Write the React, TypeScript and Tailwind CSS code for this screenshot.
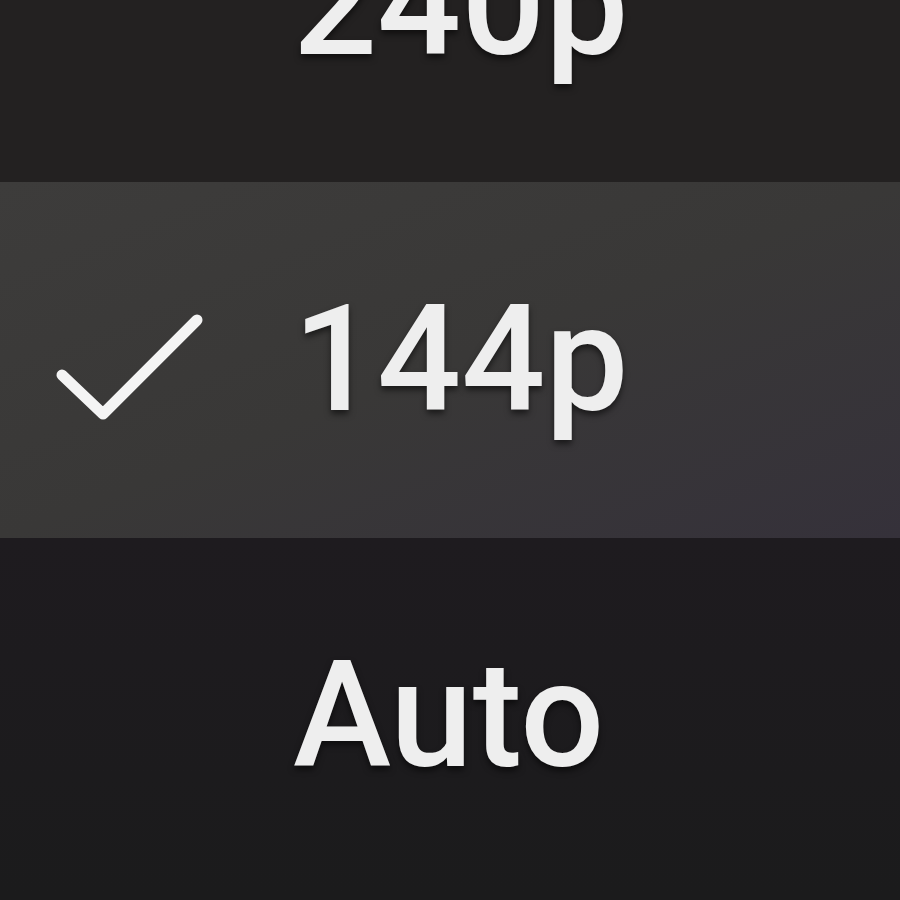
import React from "react";

type Item = { label: string; checked?: boolean; bg: string };

const items: Item[] = [
  { label: "240p", bg: "bg-[#232121]" },
  { label: "144p", checked: true, bg: "bg-gradient-to-br from-[#3d3c3b] via-[#393837] to-[#35313a]" },
  { label: "Auto", bg: "bg-gradient-to-b from-[#1e1b1f] to-[#1b1b1c]" },
];

const Check: React.FC = () => (
  <svg width="160" height="140" viewBox="0 0 160 140" fill="none">
    <path
      d="M15 85 L56 124 L150 30"
      stroke="#f4f4f4"
      strokeWidth="11"
      strokeLinecap="round"
      strokeLinejoin="round"
    />
  </svg>
);

const App: React.FC = () => {
  return (
    <div className="w-[900px] h-[900px] overflow-hidden bg-[#1b1b1c] select-none">
      <div className="flex flex-col -mt-[174px]">
        {items.map((item) => (
          <div key={item.label} className={`h-[356px] flex items-center ${item.bg}`}>
            <div className="w-[160px] h-[140px] ml-[47px] shrink-0">
              {item.checked && <Check />}
            </div>
            <span className="ml-[86px] text-[148px] leading-none font-medium text-[#eeeeee] font-['Roboto',sans-serif] [text-shadow:0_4px_6px_rgba(0,0,0,0.55)]">
              {item.label}
            </span>
          </div>
        ))}
      </div>
    </div>
  );
};

export default App;
